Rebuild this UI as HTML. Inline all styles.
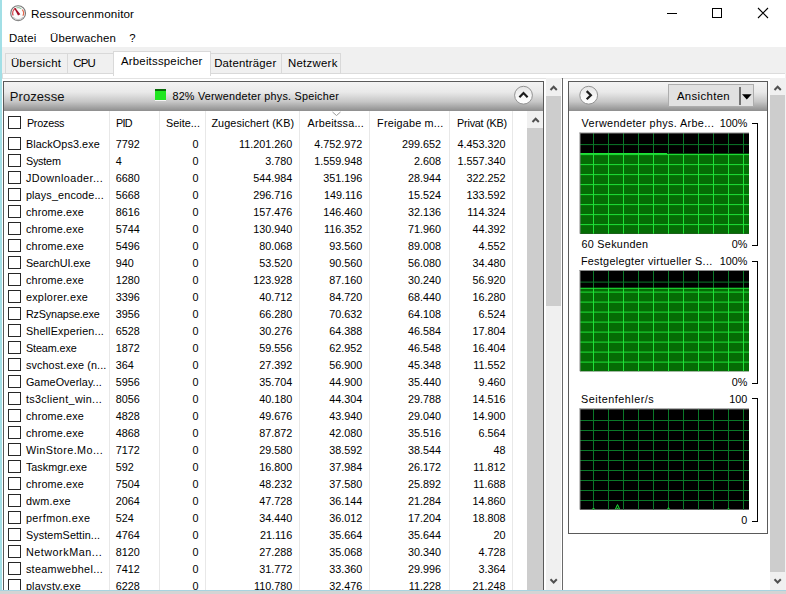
<!DOCTYPE html><html><head><meta charset="utf-8"><title>Ressourcenmonitor</title><style>
html,body{margin:0;padding:0;}
body{width:786px;height:594px;overflow:hidden;background:#fff;position:relative;
 font-family:"Liberation Sans",sans-serif;font-size:10.8px;color:#000;}
.a{position:absolute;white-space:nowrap;}
.t{position:absolute;white-space:nowrap;line-height:17px;height:17px;}
.r{text-align:right;}
.cb{position:absolute;width:11px;height:11px;border:1px solid #262626;background:#fff;left:8px;}
.sep{position:absolute;width:1px;background:#e8e8e8;top:111px;height:479px;}
.tab{position:absolute;top:53px;height:19px;border:1px solid #d9d9d9;background:#f0f0f0;}
.m{font-size:11.4px;line-height:17px;}
</style></head><body>
<div class="a" style="left:0;top:0;width:2px;height:594px;background:#a2dfe6"></div>
<svg class="a" style="left:9px;top:4px" width="18" height="19" viewBox="0 0 18 19"><circle cx="9.1" cy="9.2" r="7.4" fill="#fcfcfc" stroke="#787878" stroke-width="1.15"/><path d="M4.1 13.2 A6.3 6.3 0 0 0 14.1 13.2" fill="none" stroke="#c9c9c9" stroke-width="1.3"/><path d="M4.2 11.6 A5.6 5.6 0 0 1 6.6 4.2" fill="none" stroke="#d6464c" stroke-width="1.2"/><path d="M7.4 3.9 A5.6 5.6 0 0 1 12.4 4.7" fill="none" stroke="#86b890" stroke-width="1"/><path d="M13.3 5.6 A5.6 5.6 0 0 1 13.9 11.8" fill="none" stroke="#e2664c" stroke-width="1.2"/><path d="M5.2 4.3 L6.4 3.9 L11.3 10.2 L9.0 11.6 Z" fill="#a20e26"/></svg>
<div class="a" id="title" style="left:30.90px;top:5.2px;letter-spacing:0.110px;font-size:11.7px;line-height:17px;">Ressourcenmonitor</div>
<div class="a" style="left:667px;top:13px;width:10px;height:1px;background:#000"></div>
<div class="a" style="left:712px;top:8px;width:8px;height:8px;border:1px solid #000"></div>
<svg class="a" style="left:757px;top:7px" width="12" height="12" viewBox="0 0 12 12"><path d="M1 1 L11 11 M11 1 L1 11" stroke="#000" stroke-width="1.1" fill="none"/></svg>
<div class="a m" id="m1" style="left:8.90px;top:30.3px;letter-spacing:0.202px;">Datei</div>
<div class="a m" id="m2" style="left:50.00px;top:30.3px;letter-spacing:0.216px;">Überwachen</div>
<div class="a m" id="m3" style="left:129.20px;top:30.3px;">?</div>
<div class="a" style="left:2px;top:47px;width:784px;height:26px;background:#f0f0f0"></div>
<div class="a" style="left:2px;top:73px;width:782px;height:4px;border:1px solid #dcdcdc;border-bottom-color:#e3e3e3;background:#fff"></div>
<div class="tab" style="left:5px;width:61px;"></div>
<div class="tab" style="left:67px;width:45px;"></div>
<div class="tab" style="left:210px;width:70px;"></div>
<div class="tab" style="left:281px;width:58px;"></div>
<div class="a" style="left:113px;top:51px;width:96px;height:24px;border:1px solid #d9d9d9;border-bottom:none;background:#fff;"></div>
<div class="a m" id="t1" style="left:10.90px;top:55px;letter-spacing:0.247px;">Übersicht</div>
<div class="a m" id="t2" style="left:73.20px;top:55px;letter-spacing:-0.731px;">CPU</div>
<div class="a m" id="t3" style="left:121.00px;top:53px;letter-spacing:0.206px;">Arbeitsspeicher</div>
<div class="a m" id="t4" style="left:214.20px;top:55px;letter-spacing:0.184px;">Datenträger</div>
<div class="a m" id="t5" style="left:287.90px;top:55px;letter-spacing:0.288px;">Netzwerk</div>
<div class="a" style="left:3px;top:81px;width:539px;height:520px;border:1px solid #5a5a5a;background:#fff"></div>
<div class="a" style="left:4px;top:82px;width:539px;height:29px;background:linear-gradient(#f3f3f3 0%,#e9e9e9 35%,#c6c6c6 68%,#8e8e8e 100%)"></div>
<div class="a" id="hproz" style="left:9.80px;top:86.8px;letter-spacing:0.071px;font-size:13px;line-height:20px;color:#111;">Prozesse</div>
<div class="a" style="left:155px;top:89px;width:11px;height:9px;background:#20e620;border-top:2px solid #0a6a0a;border-bottom:1px solid #f4f4f4;"></div>
<div class="t" id="hmem" style="left:172.40px;top:88.2px;letter-spacing:0.233px;">82% Verwendeter phys. Speicher</div>
<svg class="a" style="left:513px;top:85px" width="21" height="21" viewBox="0 0 21 21"><defs><linearGradient id="cg" x1="0" y1="0" x2="0" y2="1"><stop offset="0" stop-color="#e4e4e4"/><stop offset="0.6" stop-color="#f8f8f8"/><stop offset="1" stop-color="#fff"/></linearGradient></defs><circle cx="10.5" cy="10.2" r="8.9" fill="url(#cg)" stroke="#929292" stroke-width="1"/><path d="M6.4 12.3 L10.5 8.1 L14.6 12.3" stroke="#1c1c1c" stroke-width="2.2" fill="none"/></svg>
<div class="sep" style="left:109px"></div>
<div class="sep" style="left:159px"></div>
<div class="sep" style="left:205px"></div>
<div class="sep" style="left:299px"></div>
<div class="sep" style="left:369px"></div>
<div class="sep" style="left:449px"></div>
<div class="sep" style="left:512px"></div>
<div class="cb" style="top:116.4px"></div>
<div class="t" id="h0" style="left:26.90px;top:114.6px;letter-spacing:-0.236px;">Prozess</div>
<div class="t" id="h1" style="left:116.10px;top:114.6px;letter-spacing:-0.750px;">PID</div>
<div class="t" id="h2" style="left:166.10px;top:114.6px;letter-spacing:0.027px;">Seite...</div>
<div class="t" id="h3" style="left:211.40px;top:114.6px;letter-spacing:0.112px;">Zugesichert (KB)</div>
<div class="t" id="h4" style="left:307.60px;top:114.6px;letter-spacing:0.199px;">Arbeitssa...</div>
<div class="t" id="h5" style="left:377.10px;top:114.6px;letter-spacing:0.208px;">Freigabe m...</div>
<div class="t" id="h6" style="left:457.10px;top:114.6px;letter-spacing:-0.220px;">Privat (KB)</div>
<svg class="a" style="left:331px;top:111px" width="11" height="6" viewBox="0 0 11 6"><path d="M1.5 1 L5.5 4.5 L9.5 1" stroke="#9a9a9a" stroke-width="1" fill="none"/></svg>
<div class="a" style="left:4px;top:111px;width:523px;height:479px;overflow:hidden">
<div class="cb" style="left:4px;top:26.4px"></div>
<div class="t" id="p0" style="left:21.90px;top:25px;letter-spacing:0.098px;">BlackOps3.exe</div>
<div class="t" style="left:111.80000000000001px;top:25px">7792</div>
<div class="t r" style="left:94.5px;width:100px;top:25px">0</div>
<div class="t r" style="left:188.2px;width:100px;top:25px">11.201.260</div>
<div class="t r" style="left:258.3px;width:100px;top:25px">4.752.972</div>
<div class="t r" style="left:337.0px;width:100px;top:25px">299.652</div>
<div class="t r" style="left:401.5px;width:100px;top:25px">4.453.320</div>
<div class="cb" style="left:4px;top:43.4px"></div>
<div class="t" id="p1" style="left:21.90px;top:42px;letter-spacing:-0.200px;">System</div>
<div class="t" style="left:111.80000000000001px;top:42px">4</div>
<div class="t r" style="left:94.5px;width:100px;top:42px">0</div>
<div class="t r" style="left:188.2px;width:100px;top:42px">3.780</div>
<div class="t r" style="left:258.3px;width:100px;top:42px">1.559.948</div>
<div class="t r" style="left:337.0px;width:100px;top:42px">2.608</div>
<div class="t r" style="left:401.5px;width:100px;top:42px">1.557.340</div>
<div class="cb" style="left:4px;top:60.4px"></div>
<div class="t" id="p2" style="left:21.90px;top:59px;letter-spacing:0.421px;">JDownloader...</div>
<div class="t" style="left:111.80000000000001px;top:59px">6680</div>
<div class="t r" style="left:94.5px;width:100px;top:59px">0</div>
<div class="t r" style="left:188.2px;width:100px;top:59px">544.984</div>
<div class="t r" style="left:258.3px;width:100px;top:59px">351.196</div>
<div class="t r" style="left:337.0px;width:100px;top:59px">28.944</div>
<div class="t r" style="left:401.5px;width:100px;top:59px">322.252</div>
<div class="cb" style="left:4px;top:77.4px"></div>
<div class="t" id="p3" style="left:21.90px;top:76px;letter-spacing:0.161px;">plays_encode...</div>
<div class="t" style="left:111.80000000000001px;top:76px">5668</div>
<div class="t r" style="left:94.5px;width:100px;top:76px">0</div>
<div class="t r" style="left:188.2px;width:100px;top:76px">296.716</div>
<div class="t r" style="left:258.3px;width:100px;top:76px">149.116</div>
<div class="t r" style="left:337.0px;width:100px;top:76px">15.524</div>
<div class="t r" style="left:401.5px;width:100px;top:76px">133.592</div>
<div class="cb" style="left:4px;top:94.4px"></div>
<div class="t" id="p4" style="left:21.90px;top:93px;letter-spacing:0.175px;">chrome.exe</div>
<div class="t" style="left:111.80000000000001px;top:93px">8616</div>
<div class="t r" style="left:94.5px;width:100px;top:93px">0</div>
<div class="t r" style="left:188.2px;width:100px;top:93px">157.476</div>
<div class="t r" style="left:258.3px;width:100px;top:93px">146.460</div>
<div class="t r" style="left:337.0px;width:100px;top:93px">32.136</div>
<div class="t r" style="left:401.5px;width:100px;top:93px">114.324</div>
<div class="cb" style="left:4px;top:111.4px"></div>
<div class="t" id="p5" style="left:21.90px;top:110px;letter-spacing:0.175px;">chrome.exe</div>
<div class="t" style="left:111.80000000000001px;top:110px">5744</div>
<div class="t r" style="left:94.5px;width:100px;top:110px">0</div>
<div class="t r" style="left:188.2px;width:100px;top:110px">130.940</div>
<div class="t r" style="left:258.3px;width:100px;top:110px">116.352</div>
<div class="t r" style="left:337.0px;width:100px;top:110px">71.960</div>
<div class="t r" style="left:401.5px;width:100px;top:110px">44.392</div>
<div class="cb" style="left:4px;top:128.4px"></div>
<div class="t" id="p6" style="left:21.90px;top:127px;letter-spacing:0.175px;">chrome.exe</div>
<div class="t" style="left:111.80000000000001px;top:127px">5496</div>
<div class="t r" style="left:94.5px;width:100px;top:127px">0</div>
<div class="t r" style="left:188.2px;width:100px;top:127px">80.068</div>
<div class="t r" style="left:258.3px;width:100px;top:127px">93.560</div>
<div class="t r" style="left:337.0px;width:100px;top:127px">89.008</div>
<div class="t r" style="left:401.5px;width:100px;top:127px">4.552</div>
<div class="cb" style="left:4px;top:145.4px"></div>
<div class="t" id="p7" style="left:21.90px;top:144px;letter-spacing:-0.066px;">SearchUI.exe</div>
<div class="t" style="left:111.80000000000001px;top:144px">940</div>
<div class="t r" style="left:94.5px;width:100px;top:144px">0</div>
<div class="t r" style="left:188.2px;width:100px;top:144px">53.520</div>
<div class="t r" style="left:258.3px;width:100px;top:144px">90.560</div>
<div class="t r" style="left:337.0px;width:100px;top:144px">56.080</div>
<div class="t r" style="left:401.5px;width:100px;top:144px">34.480</div>
<div class="cb" style="left:4px;top:162.4px"></div>
<div class="t" id="p8" style="left:21.90px;top:161px;letter-spacing:0.175px;">chrome.exe</div>
<div class="t" style="left:111.80000000000001px;top:161px">1280</div>
<div class="t r" style="left:94.5px;width:100px;top:161px">0</div>
<div class="t r" style="left:188.2px;width:100px;top:161px">123.928</div>
<div class="t r" style="left:258.3px;width:100px;top:161px">87.160</div>
<div class="t r" style="left:337.0px;width:100px;top:161px">30.240</div>
<div class="t r" style="left:401.5px;width:100px;top:161px">56.920</div>
<div class="cb" style="left:4px;top:179.4px"></div>
<div class="t" id="p9" style="left:21.90px;top:178px;letter-spacing:0.288px;">explorer.exe</div>
<div class="t" style="left:111.80000000000001px;top:178px">3396</div>
<div class="t r" style="left:94.5px;width:100px;top:178px">0</div>
<div class="t r" style="left:188.2px;width:100px;top:178px">40.712</div>
<div class="t r" style="left:258.3px;width:100px;top:178px">84.720</div>
<div class="t r" style="left:337.0px;width:100px;top:178px">68.440</div>
<div class="t r" style="left:401.5px;width:100px;top:178px">16.280</div>
<div class="cb" style="left:4px;top:196.4px"></div>
<div class="t" id="p10" style="left:21.90px;top:195px;letter-spacing:-0.152px;">RzSynapse.exe</div>
<div class="t" style="left:111.80000000000001px;top:195px">3956</div>
<div class="t r" style="left:94.5px;width:100px;top:195px">0</div>
<div class="t r" style="left:188.2px;width:100px;top:195px">66.280</div>
<div class="t r" style="left:258.3px;width:100px;top:195px">70.632</div>
<div class="t r" style="left:337.0px;width:100px;top:195px">64.108</div>
<div class="t r" style="left:401.5px;width:100px;top:195px">6.524</div>
<div class="cb" style="left:4px;top:213.4px"></div>
<div class="t" id="p11" style="left:21.90px;top:212px;letter-spacing:0.152px;">ShellExperien...</div>
<div class="t" style="left:111.80000000000001px;top:212px">6528</div>
<div class="t r" style="left:94.5px;width:100px;top:212px">0</div>
<div class="t r" style="left:188.2px;width:100px;top:212px">30.276</div>
<div class="t r" style="left:258.3px;width:100px;top:212px">64.388</div>
<div class="t r" style="left:337.0px;width:100px;top:212px">46.584</div>
<div class="t r" style="left:401.5px;width:100px;top:212px">17.804</div>
<div class="cb" style="left:4px;top:230.4px"></div>
<div class="t" id="p12" style="left:21.90px;top:229px;letter-spacing:-0.103px;">Steam.exe</div>
<div class="t" style="left:111.80000000000001px;top:229px">1872</div>
<div class="t r" style="left:94.5px;width:100px;top:229px">0</div>
<div class="t r" style="left:188.2px;width:100px;top:229px">59.556</div>
<div class="t r" style="left:258.3px;width:100px;top:229px">62.952</div>
<div class="t r" style="left:337.0px;width:100px;top:229px">46.548</div>
<div class="t r" style="left:401.5px;width:100px;top:229px">16.404</div>
<div class="cb" style="left:4px;top:247.4px"></div>
<div class="t" id="p13" style="left:21.90px;top:246px;letter-spacing:0.111px;">svchost.exe (n...</div>
<div class="t" style="left:111.80000000000001px;top:246px">364</div>
<div class="t r" style="left:94.5px;width:100px;top:246px">0</div>
<div class="t r" style="left:188.2px;width:100px;top:246px">27.392</div>
<div class="t r" style="left:258.3px;width:100px;top:246px">56.900</div>
<div class="t r" style="left:337.0px;width:100px;top:246px">45.348</div>
<div class="t r" style="left:401.5px;width:100px;top:246px">11.552</div>
<div class="cb" style="left:4px;top:264.4px"></div>
<div class="t" id="p14" style="left:21.90px;top:263px;letter-spacing:0.084px;">GameOverlay...</div>
<div class="t" style="left:111.80000000000001px;top:263px">5956</div>
<div class="t r" style="left:94.5px;width:100px;top:263px">0</div>
<div class="t r" style="left:188.2px;width:100px;top:263px">35.704</div>
<div class="t r" style="left:258.3px;width:100px;top:263px">44.900</div>
<div class="t r" style="left:337.0px;width:100px;top:263px">35.440</div>
<div class="t r" style="left:401.5px;width:100px;top:263px">9.460</div>
<div class="cb" style="left:4px;top:281.4px"></div>
<div class="t" id="p15" style="left:21.90px;top:280px;letter-spacing:0.339px;">ts3client_win...</div>
<div class="t" style="left:111.80000000000001px;top:280px">8056</div>
<div class="t r" style="left:94.5px;width:100px;top:280px">0</div>
<div class="t r" style="left:188.2px;width:100px;top:280px">40.180</div>
<div class="t r" style="left:258.3px;width:100px;top:280px">44.304</div>
<div class="t r" style="left:337.0px;width:100px;top:280px">29.788</div>
<div class="t r" style="left:401.5px;width:100px;top:280px">14.516</div>
<div class="cb" style="left:4px;top:298.4px"></div>
<div class="t" id="p16" style="left:21.90px;top:297px;letter-spacing:0.175px;">chrome.exe</div>
<div class="t" style="left:111.80000000000001px;top:297px">4828</div>
<div class="t r" style="left:94.5px;width:100px;top:297px">0</div>
<div class="t r" style="left:188.2px;width:100px;top:297px">49.676</div>
<div class="t r" style="left:258.3px;width:100px;top:297px">43.940</div>
<div class="t r" style="left:337.0px;width:100px;top:297px">29.040</div>
<div class="t r" style="left:401.5px;width:100px;top:297px">14.900</div>
<div class="cb" style="left:4px;top:315.4px"></div>
<div class="t" id="p17" style="left:21.90px;top:314px;letter-spacing:0.175px;">chrome.exe</div>
<div class="t" style="left:111.80000000000001px;top:314px">4868</div>
<div class="t r" style="left:94.5px;width:100px;top:314px">0</div>
<div class="t r" style="left:188.2px;width:100px;top:314px">87.872</div>
<div class="t r" style="left:258.3px;width:100px;top:314px">42.080</div>
<div class="t r" style="left:337.0px;width:100px;top:314px">35.516</div>
<div class="t r" style="left:401.5px;width:100px;top:314px">6.564</div>
<div class="cb" style="left:4px;top:332.4px"></div>
<div class="t" id="p18" style="left:21.90px;top:331px;letter-spacing:0.423px;">WinStore.Mo...</div>
<div class="t" style="left:111.80000000000001px;top:331px">7172</div>
<div class="t r" style="left:94.5px;width:100px;top:331px">0</div>
<div class="t r" style="left:188.2px;width:100px;top:331px">29.580</div>
<div class="t r" style="left:258.3px;width:100px;top:331px">38.592</div>
<div class="t r" style="left:337.0px;width:100px;top:331px">38.544</div>
<div class="t r" style="left:401.5px;width:100px;top:331px">48</div>
<div class="cb" style="left:4px;top:349.4px"></div>
<div class="t" id="p19" style="left:21.90px;top:348px;letter-spacing:0.039px;">Taskmgr.exe</div>
<div class="t" style="left:111.80000000000001px;top:348px">592</div>
<div class="t r" style="left:94.5px;width:100px;top:348px">0</div>
<div class="t r" style="left:188.2px;width:100px;top:348px">16.800</div>
<div class="t r" style="left:258.3px;width:100px;top:348px">37.984</div>
<div class="t r" style="left:337.0px;width:100px;top:348px">26.172</div>
<div class="t r" style="left:401.5px;width:100px;top:348px">11.812</div>
<div class="cb" style="left:4px;top:366.4px"></div>
<div class="t" id="p20" style="left:21.90px;top:365px;letter-spacing:0.175px;">chrome.exe</div>
<div class="t" style="left:111.80000000000001px;top:365px">7504</div>
<div class="t r" style="left:94.5px;width:100px;top:365px">0</div>
<div class="t r" style="left:188.2px;width:100px;top:365px">48.232</div>
<div class="t r" style="left:258.3px;width:100px;top:365px">37.580</div>
<div class="t r" style="left:337.0px;width:100px;top:365px">25.892</div>
<div class="t r" style="left:401.5px;width:100px;top:365px">11.688</div>
<div class="cb" style="left:4px;top:383.4px"></div>
<div class="t" id="p21" style="left:21.90px;top:382px;letter-spacing:0.247px;">dwm.exe</div>
<div class="t" style="left:111.80000000000001px;top:382px">2064</div>
<div class="t r" style="left:94.5px;width:100px;top:382px">0</div>
<div class="t r" style="left:188.2px;width:100px;top:382px">47.728</div>
<div class="t r" style="left:258.3px;width:100px;top:382px">36.144</div>
<div class="t r" style="left:337.0px;width:100px;top:382px">21.284</div>
<div class="t r" style="left:401.5px;width:100px;top:382px">14.860</div>
<div class="cb" style="left:4px;top:400.4px"></div>
<div class="t" id="p22" style="left:21.90px;top:399px;letter-spacing:0.408px;">perfmon.exe</div>
<div class="t" style="left:111.80000000000001px;top:399px">524</div>
<div class="t r" style="left:94.5px;width:100px;top:399px">0</div>
<div class="t r" style="left:188.2px;width:100px;top:399px">34.440</div>
<div class="t r" style="left:258.3px;width:100px;top:399px">36.012</div>
<div class="t r" style="left:337.0px;width:100px;top:399px">17.204</div>
<div class="t r" style="left:401.5px;width:100px;top:399px">18.808</div>
<div class="cb" style="left:4px;top:417.4px"></div>
<div class="t" id="p23" style="left:21.90px;top:416px;letter-spacing:0.114px;">SystemSettin...</div>
<div class="t" style="left:111.80000000000001px;top:416px">4764</div>
<div class="t r" style="left:94.5px;width:100px;top:416px">0</div>
<div class="t r" style="left:188.2px;width:100px;top:416px">21.116</div>
<div class="t r" style="left:258.3px;width:100px;top:416px">35.664</div>
<div class="t r" style="left:337.0px;width:100px;top:416px">35.644</div>
<div class="t r" style="left:401.5px;width:100px;top:416px">20</div>
<div class="cb" style="left:4px;top:434.4px"></div>
<div class="t" id="p24" style="left:21.90px;top:433px;letter-spacing:0.524px;">NetworkMan...</div>
<div class="t" style="left:111.80000000000001px;top:433px">8120</div>
<div class="t r" style="left:94.5px;width:100px;top:433px">0</div>
<div class="t r" style="left:188.2px;width:100px;top:433px">27.288</div>
<div class="t r" style="left:258.3px;width:100px;top:433px">35.068</div>
<div class="t r" style="left:337.0px;width:100px;top:433px">30.340</div>
<div class="t r" style="left:401.5px;width:100px;top:433px">4.728</div>
<div class="cb" style="left:4px;top:451.4px"></div>
<div class="t" id="p25" style="left:21.90px;top:450px;letter-spacing:0.329px;">steamwebhel...</div>
<div class="t" style="left:111.80000000000001px;top:450px">7412</div>
<div class="t r" style="left:94.5px;width:100px;top:450px">0</div>
<div class="t r" style="left:188.2px;width:100px;top:450px">31.772</div>
<div class="t r" style="left:258.3px;width:100px;top:450px">33.360</div>
<div class="t r" style="left:337.0px;width:100px;top:450px">29.996</div>
<div class="t r" style="left:401.5px;width:100px;top:450px">3.364</div>
<div class="cb" style="left:4px;top:468.4px"></div>
<div class="t" id="p26" style="left:21.90px;top:467px;letter-spacing:0.168px;">playstv.exe</div>
<div class="t" style="left:111.80000000000001px;top:467px">6228</div>
<div class="t r" style="left:94.5px;width:100px;top:467px">0</div>
<div class="t r" style="left:188.2px;width:100px;top:467px">110.780</div>
<div class="t r" style="left:258.3px;width:100px;top:467px">32.476</div>
<div class="t r" style="left:337.0px;width:100px;top:467px">11.228</div>
<div class="t r" style="left:401.5px;width:100px;top:467px">21.248</div>
</div>
<div class="a" style="left:527px;top:111px;width:16px;height:479px;background:#f0f0f0"></div>
<div class="a" style="left:527px;top:128px;width:16px;height:480px;background:#cdcdcd"></div>
<svg class="a" style="left:530.5px;top:116px" width="9" height="7" viewBox="0 0 9 7"><path d="M1.5 6 L4.65 2.8 L7.8 6" stroke="#505050" stroke-width="2" fill="none"/></svg>
<div class="a" style="left:546px;top:78px;width:15px;height:512px;background:#f0f0f0"></div>
<div class="a" style="left:546px;top:96px;width:15px;height:210px;background:#cdcdcd"></div>
<svg class="a" style="left:549px;top:84px" width="9" height="7" viewBox="0 0 9 7"><path d="M1.5 6 L4.65 2.8 L7.8 6" stroke="#505050" stroke-width="2" fill="none"/></svg>
<svg class="a" style="left:549px;top:578px" width="9" height="7" viewBox="0 0 9 7"><path d="M1.5 1.3 L4.65 4.5 L7.8 1.3" stroke="#505050" stroke-width="2" fill="none"/></svg>
<div class="a" style="left:562px;top:78px;width:1px;height:512px;background:#6a6a6a"></div>
<div class="a" style="left:568px;top:81px;width:198px;height:451px;border:1px solid #5a5a5a;background:#fff"></div>
<div class="a" style="left:569px;top:82px;width:198px;height:29px;background:linear-gradient(#f3f3f3 0%,#e9e9e9 35%,#c6c6c6 68%,#8e8e8e 100%)"></div>
<svg class="a" style="left:578px;top:85px" width="21" height="21" viewBox="0 0 21 21"><circle cx="10.7" cy="10.2" r="8.9" fill="url(#cg)" stroke="#929292" stroke-width="1"/><path d="M8.7 6.1 L12.9 10.2 L8.7 14.3" stroke="#1c1c1c" stroke-width="2.2" fill="none"/></svg>
<div class="a" style="left:668px;top:84px;width:84px;height:21px;border:1px solid #adadad;background:#e1e1e1"></div>
<div class="a m" id="ans" style="left:676.90px;top:88px;letter-spacing:0.346px;">Ansichten</div>
<div class="a" style="left:739px;top:87px;width:2px;height:18px;background:#747474"></div>
<svg class="a" style="left:742px;top:94px" width="10" height="7" viewBox="0 0 10 7"><path d="M0 0.3 L9.6 0.3 L4.8 5.6 Z" fill="#000"/></svg>
<div class="t" id="g1l" style="left:581.60px;top:115px;letter-spacing:0.361px;">Verwendeter phys. Arbe...</div>
<div class="t r" style="left:647.3px;width:100px;top:115px">100%</div>
<svg class="a" style="left:579px;top:132px" width="172" height="104" viewBox="0 0 172 104"><g transform="translate(0,0.5)"><rect x="1" y="0.5" width="169" height="100.7" fill="#000"/><rect x="1" y="20.5" width="169" height="80.7" fill="#056c05"/><rect x="14" y="0.5" width="1" height="20.0" fill="#0a7828"/><rect x="14" y="20.5" width="1" height="80.7" fill="#1fe238"/><rect x="29" y="0.5" width="1" height="20.0" fill="#0a7828"/><rect x="29" y="20.5" width="1" height="80.7" fill="#1fe238"/><rect x="44" y="0.5" width="1" height="20.0" fill="#0a7828"/><rect x="44" y="20.5" width="1" height="80.7" fill="#1fe238"/><rect x="59" y="0.5" width="1" height="20.0" fill="#0a7828"/><rect x="59" y="20.5" width="1" height="80.7" fill="#1fe238"/><rect x="74" y="0.5" width="1" height="20.0" fill="#0a7828"/><rect x="74" y="20.5" width="1" height="80.7" fill="#1fe238"/><rect x="89" y="0.5" width="1" height="20.0" fill="#0a7828"/><rect x="89" y="20.5" width="1" height="80.7" fill="#1fe238"/><rect x="104" y="0.5" width="1" height="20.0" fill="#0a7828"/><rect x="104" y="20.5" width="1" height="80.7" fill="#1fe238"/><rect x="119" y="0.5" width="1" height="20.0" fill="#0a7828"/><rect x="119" y="20.5" width="1" height="80.7" fill="#1fe238"/><rect x="134" y="0.5" width="1" height="20.0" fill="#0a7828"/><rect x="134" y="20.5" width="1" height="80.7" fill="#1fe238"/><rect x="149" y="0.5" width="1" height="20.0" fill="#0a7828"/><rect x="149" y="20.5" width="1" height="80.7" fill="#1fe238"/><rect x="164" y="0.5" width="1" height="20.0" fill="#0a7828"/><rect x="164" y="20.5" width="1" height="80.7" fill="#1fe238"/><rect x="1" y="11.6" width="169" height="1" fill="#0a7828"/><rect x="1" y="21.6" width="169" height="1" fill="#1fe238"/><rect x="1" y="31.6" width="169" height="1" fill="#1fe238"/><rect x="1" y="41.6" width="169" height="1" fill="#1fe238"/><rect x="1" y="51.6" width="169" height="1" fill="#1fe238"/><rect x="1" y="61.6" width="169" height="1" fill="#1fe238"/><rect x="1" y="71.6" width="169" height="1" fill="#1fe238"/><rect x="1" y="81.6" width="169" height="1" fill="#1fe238"/><rect x="1" y="91.6" width="169" height="1" fill="#1fe238"/><rect x="1" y="20.5" width="87" height="1" fill="#1fe238"/><rect x="88" y="21.1" width="82" height="1" fill="#1fe238"/><rect x="88" y="20.5" width="82" height="0.6" fill="#000"/><rect x="0.5" y="0" width="169.5" height="1" fill="#8c8c8c"/><rect x="0.5" y="0" width="1" height="101.2" fill="#8c8c8c"/></g></svg>
<div class="t" id="g1b" style="left:581.40px;top:236px;letter-spacing:0.306px;">60 Sekunden</div>
<div class="t r" style="left:647.3px;width:100px;top:236px">0%</div>
<div class="a" style="left:752px;top:122.5px;width:5px;height:121.5px;border:1px solid #000;border-left:none"></div>
<div class="t" id="g2l" style="left:580.90px;top:253px;letter-spacing:0.307px;">Festgelegter virtueller S...</div>
<div class="t r" style="left:647.3px;width:100px;top:253px">100%</div>
<svg class="a" style="left:579px;top:270px" width="172" height="104" viewBox="0 0 172 104"><g transform="translate(0,0)"><rect x="1" y="0.5" width="169" height="100.7" fill="#000"/><rect x="1" y="17.8" width="169" height="83.4" fill="#056c05"/><rect x="14" y="0.5" width="1" height="17.3" fill="#0a7828"/><rect x="14" y="17.8" width="1" height="83.4" fill="#1fe238"/><rect x="29" y="0.5" width="1" height="17.3" fill="#0a7828"/><rect x="29" y="17.8" width="1" height="83.4" fill="#1fe238"/><rect x="44" y="0.5" width="1" height="17.3" fill="#0a7828"/><rect x="44" y="17.8" width="1" height="83.4" fill="#1fe238"/><rect x="59" y="0.5" width="1" height="17.3" fill="#0a7828"/><rect x="59" y="17.8" width="1" height="83.4" fill="#1fe238"/><rect x="74" y="0.5" width="1" height="17.3" fill="#0a7828"/><rect x="74" y="17.8" width="1" height="83.4" fill="#1fe238"/><rect x="89" y="0.5" width="1" height="17.3" fill="#0a7828"/><rect x="89" y="17.8" width="1" height="83.4" fill="#1fe238"/><rect x="104" y="0.5" width="1" height="17.3" fill="#0a7828"/><rect x="104" y="17.8" width="1" height="83.4" fill="#1fe238"/><rect x="119" y="0.5" width="1" height="17.3" fill="#0a7828"/><rect x="119" y="17.8" width="1" height="83.4" fill="#1fe238"/><rect x="134" y="0.5" width="1" height="17.3" fill="#0a7828"/><rect x="134" y="17.8" width="1" height="83.4" fill="#1fe238"/><rect x="149" y="0.5" width="1" height="17.3" fill="#0a7828"/><rect x="149" y="17.8" width="1" height="83.4" fill="#1fe238"/><rect x="164" y="0.5" width="1" height="17.3" fill="#0a7828"/><rect x="164" y="17.8" width="1" height="83.4" fill="#1fe238"/><rect x="1" y="11.6" width="169" height="1" fill="#0a7828"/><rect x="1" y="21.6" width="169" height="1" fill="#1fe238"/><rect x="1" y="31.6" width="169" height="1" fill="#1fe238"/><rect x="1" y="41.6" width="169" height="1" fill="#1fe238"/><rect x="1" y="51.6" width="169" height="1" fill="#1fe238"/><rect x="1" y="61.6" width="169" height="1" fill="#1fe238"/><rect x="1" y="71.6" width="169" height="1" fill="#1fe238"/><rect x="1" y="81.6" width="169" height="1" fill="#1fe238"/><rect x="1" y="91.6" width="169" height="1" fill="#1fe238"/><rect x="1" y="17.8" width="169" height="1" fill="#1fe238"/><rect x="0.5" y="0" width="169.5" height="1" fill="#8c8c8c"/><rect x="0.5" y="0" width="1" height="101.2" fill="#8c8c8c"/></g></svg>
<div class="t r" style="left:647.3px;width:100px;top:373.5px">0%</div>
<div class="a" style="left:752px;top:261px;width:5px;height:121px;border:1px solid #000;border-left:none"></div>
<div class="t" id="g3l" style="left:581.10px;top:390.5px;letter-spacing:0.505px;">Seitenfehler/s</div>
<div class="t r" style="left:647.3px;width:100px;top:390.5px">100</div>
<svg class="a" style="left:579px;top:408px" width="172" height="104" viewBox="0 0 172 104"><g transform="translate(0,0.4)"><rect x="1" y="0.5" width="169" height="100.7" fill="#000"/><rect x="14" y="0.5" width="1" height="100.7" fill="#0a7828"/><rect x="29" y="0.5" width="1" height="100.7" fill="#0a7828"/><rect x="44" y="0.5" width="1" height="100.7" fill="#0a7828"/><rect x="59" y="0.5" width="1" height="100.7" fill="#0a7828"/><rect x="74" y="0.5" width="1" height="100.7" fill="#0a7828"/><rect x="89" y="0.5" width="1" height="100.7" fill="#0a7828"/><rect x="104" y="0.5" width="1" height="100.7" fill="#0a7828"/><rect x="119" y="0.5" width="1" height="100.7" fill="#0a7828"/><rect x="134" y="0.5" width="1" height="100.7" fill="#0a7828"/><rect x="149" y="0.5" width="1" height="100.7" fill="#0a7828"/><rect x="164" y="0.5" width="1" height="100.7" fill="#0a7828"/><rect x="1" y="11.6" width="169" height="1" fill="#0a7828"/><rect x="1" y="21.6" width="169" height="1" fill="#0a7828"/><rect x="1" y="31.6" width="169" height="1" fill="#0a7828"/><rect x="1" y="41.6" width="169" height="1" fill="#0a7828"/><rect x="1" y="51.6" width="169" height="1" fill="#0a7828"/><rect x="1" y="61.6" width="169" height="1" fill="#0a7828"/><rect x="1" y="71.6" width="169" height="1" fill="#0a7828"/><rect x="1" y="81.6" width="169" height="1" fill="#0a7828"/><rect x="1" y="91.6" width="169" height="1" fill="#0a7828"/><path d="M13.3 101 L14.5 99.6 L15.7 101 M36.3 101 L38.5 96.2 L40.7 101 M37.6 100 L39.4 100 M88.3 101 L89.5 99.3 L90.7 101 M148.3 101 L149.5 99.8 L150.7 101" fill="none" stroke="#1fe238" stroke-width="1"/><rect x="0.5" y="0" width="169.5" height="1" fill="#8c8c8c"/><rect x="0.5" y="0" width="1" height="101.2" fill="#8c8c8c"/></g></svg>
<div class="t r" style="left:647.3px;width:100px;top:511.5px">0</div>
<div class="a" style="left:752px;top:397.5px;width:5px;height:122.5px;border:1px solid #000;border-left:none"></div>
<div class="a" style="left:785px;top:73px;width:1px;height:517px;background:#f2f2f2"></div>
<div class="a" style="left:770px;top:78px;width:15px;height:512px;background:#f0f0f0"></div>
<div class="a" style="left:770px;top:95px;width:15px;height:477px;background:#cdcdcd"></div>
<svg class="a" style="left:773px;top:84px" width="9" height="7" viewBox="0 0 9 7"><path d="M1.5 6 L4.65 2.8 L7.8 6" stroke="#505050" stroke-width="2" fill="none"/></svg>
<svg class="a" style="left:773px;top:578px" width="9" height="7" viewBox="0 0 9 7"><path d="M1.5 1.3 L4.65 4.5 L7.8 1.3" stroke="#505050" stroke-width="2" fill="none"/></svg>
<div class="a" style="left:0;top:590px;width:786px;height:1px;background:#a9d3e0"></div>
<div class="a" style="left:0;top:591px;width:786px;height:3px;background:#d4d4d4"></div>
</body></html>
